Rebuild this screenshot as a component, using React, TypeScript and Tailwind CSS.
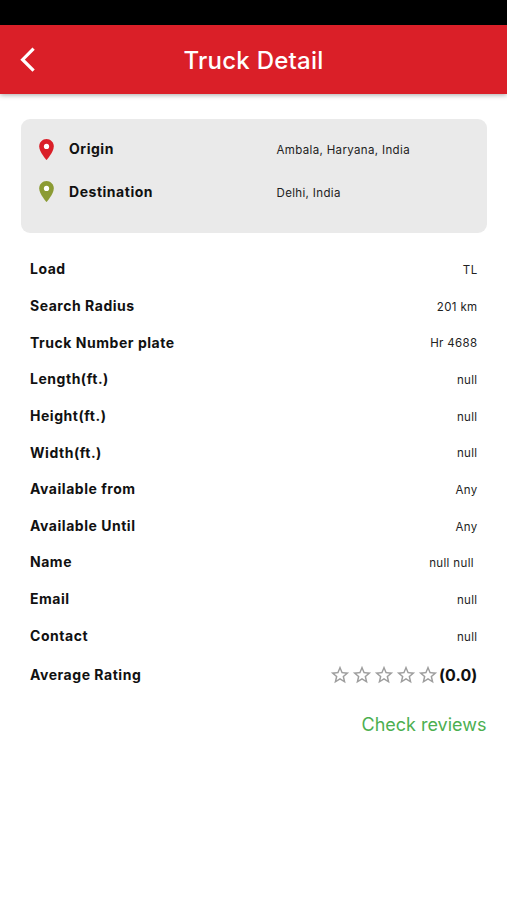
import React from 'react';
import { MdStarBorder } from 'react-icons/md';

const details = [
  { label: 'Load', value: 'TL' },
  { label: 'Search Radius', value: '201 km' },
  { label: 'Truck Number plate', value: 'Hr 4688' },
  { label: 'Length(ft.)', value: 'null' },
  { label: 'Height(ft.)', value: 'null' },
  { label: 'Width(ft.)', value: 'null' },
  { label: 'Available from', value: 'Any' },
  { label: 'Available Until', value: 'Any' },
  { label: 'Name', value: 'null null ' },
  { label: 'Email', value: 'null' },
  { label: 'Contact', value: 'null' },
];

function Pin({ className }: { className: string }) {
  return (
    <svg viewBox="0 0 24 24" className={`w-[25px] h-[25px] shrink-0 ${className}`}>
      <path
        fill="currentColor"
        d="M12 2C8.13 2 5 5.13 5 9c0 5.25 7 13 7 13s7-7.75 7-13c0-3.87-3.13-7-7-7z"
      />
      <circle cx="12" cy="9" r="2.5" fill="#fff" />
    </svg>
  );
}

function Label({ children }: { children: React.ReactNode }) {
  return <span className="text-sm font-bold tracking-[0.53px]">{children}</span>;
}

function Value({ children }: { children: React.ReactNode }) {
  return <span className="text-[11.5px] tracking-[0.35px] text-[#222] pt-[3px] whitespace-pre">{children}</span>;
}

function Place({ color, label, value }: { color: string; label: string; value: string }) {
  return (
    <div className="grid grid-cols-[35.5px_207.5px_1fr] items-center h-[42.5px]">
      <Pin className={color} />
      <Label>{label}</Label>
      <Value>{value}</Value>
    </div>
  );
}

export default function App() {
  return (
    <div className="w-full h-[900px] bg-white text-[#111] font-['Inter',sans-serif] overflow-hidden">
      <div className="h-[25px] bg-black" />
      <header className="grid grid-cols-[60px_1fr_60px] items-center h-[69px] bg-[#da1f28] text-white shadow-[0_1px_5px_rgba(0,0,0,0.35)]">
        <button type="button" className="pl-[18px]">
          <svg viewBox="0 0 20 28" className="w-5 h-7" fill="none" stroke="currentColor" strokeWidth="3.2">
            <path d="M15.6 2.7 4.6 13.7l11 11" />
          </svg>
        </button>
        <h1 className="text-center text-2xl font-medium tracking-[0.25px] pt-0.5">Truck Detail</h1>
      </header>

      <section className="mt-[25px] ml-[20.5px] mr-5 h-[114px] pt-[9px] pl-[13px] rounded-[9px] bg-[#eaeaea]">
        <Place color="text-[#da1f28]" label="Origin" value="Ambala, Haryana, India" />
        <Place color="text-[#8b9b34]" label="Destination" value="Delhi, India" />
      </section>

      <section className="mt-[18px] ml-[30px] mr-[29.5px]">
        {details.map((item) => (
          <div key={item.label} className="flex items-center justify-between h-[36.65px]">
            <Label>{item.label}</Label>
            <Value>{item.value}</Value>
          </div>
        ))}
        <div className="flex items-center justify-between h-[42px]">
          <Label>Average Rating</Label>
          <div className="flex items-center">
            {[1, 2, 3, 4, 5].map((n) => (
              <MdStarBorder key={n} className="w-[22px] h-[22px] text-[#9e9e9e]" />
            ))}
            <span className="text-base font-bold tracking-[0.1px]">(0.0)</span>
          </div>
        </div>
      </section>

      <div className="mt-[15px] mr-[20.5px] text-right text-lg text-[#4caf50]">
        <a href="#">Check reviews</a>
      </div>
    </div>
  );
}
